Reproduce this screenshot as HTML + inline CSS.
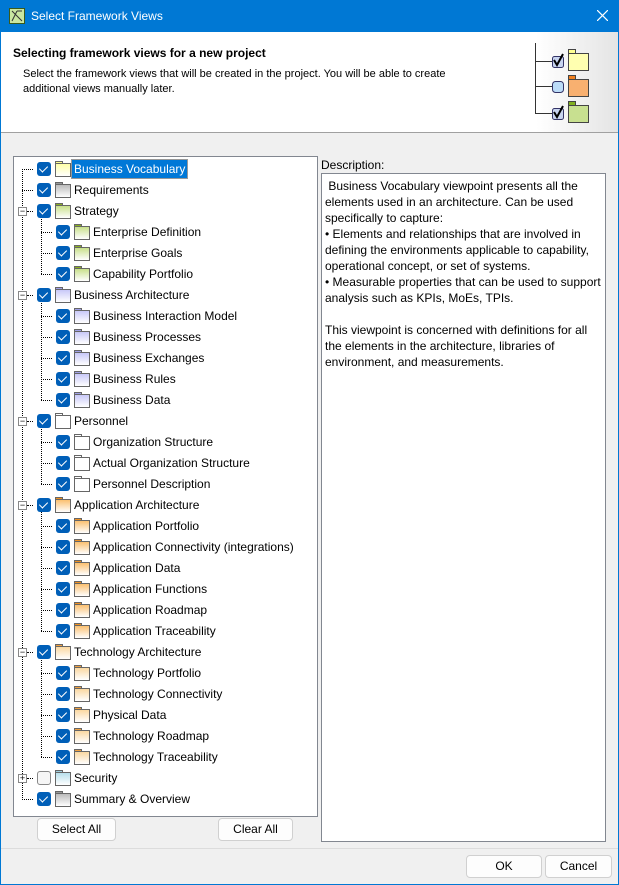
<!DOCTYPE html>
<html><head><meta charset="utf-8"><style>
*{box-sizing:border-box;margin:0;padding:0}
body{width:619px;height:885px;background:#f0f0f0;font-family:"Liberation Sans",Tahoma,sans-serif;font-size:12px;color:#000;position:relative;overflow:hidden}
.win{position:absolute;left:0;top:0;width:619px;height:885px;border:1px solid #0078d4}
.title{position:absolute;left:0;top:0;width:619px;height:32px;background:#0078d4;color:#fff;font-size:12px}
.title span{position:absolute;left:31px;top:9px}
.hdr{position:absolute;left:1px;top:32px;width:617px;height:101px;background:#fff;border-bottom:1px solid #a0a0a0;overflow:hidden}
.tree{position:absolute;left:13px;top:156px;width:305px;height:661px;background:#fff;border:1px solid #828790}
.row{position:absolute;height:16px;line-height:16px;white-space:nowrap}
.cb{position:absolute;top:1px;width:14px;height:14px;border-radius:3px;background:#005fb8}
.cb::after{content:"";position:absolute;left:4px;top:2px;width:4px;height:7px;border:solid #fff;border-width:0 1px 1px 0;transform:rotate(45deg)}
.cb.off{background:#f6f6f6;border:1px solid #888}
.cb.off::after{display:none}
.fd{position:absolute;top:2px;width:14px;height:12px}
.fd::before{content:"";position:absolute;left:0;top:-2px;width:6px;height:3px;border:1px solid #666;border-bottom:none;background:var(--t)}
.fd::after{content:"";position:absolute;left:0;top:0;width:14px;height:12px;border:1px solid #666;background:linear-gradient(var(--c),#fff)}
.tx{position:absolute;top:0}
.dv{position:absolute;border-left:1px dotted #000;width:0}
.dh{position:absolute;border-top:1px dotted #000;height:0}
.ex{position:absolute;width:9px;height:9px;border:1px solid #888;background:#fff;font-size:9px;line-height:7px;text-align:center;color:#000}
.desc{position:absolute;left:321px;top:173px;width:285px;height:669px;background:#fff;border:1px solid #828790;padding:4px 3px;line-height:16px}
.btn{position:absolute;height:23px;border:1px solid #d0d0d0;border-radius:4px;background:#fdfdfd;text-align:center;line-height:21px}
</style></head><body>
<div class="win"></div>
<div class="title">
<svg style="position:absolute;left:9px;top:8px" width="16" height="16"><rect x="0.5" y="0.5" width="15" height="15" fill="#c9e7a1" stroke="#3a5a1a"/><path d="M3 3 L13 13 M3 13 L8 3 M8 3 L13 3" stroke="#333" fill="none"/></svg>
<span>Select Framework Views</span>
<svg style="position:absolute;left:597px;top:10px" width="11" height="11"><path d="M0 0L11 11M11 0L0 11" stroke="#fff" stroke-width="1.2"/></svg>
</div>
<div class="hdr">
<div style="position:absolute;left:515px;top:0;width:102px;height:100px;background:linear-gradient(90deg,#fff 20%,#e4e4e4)"></div>
<div style="position:absolute;left:12px;top:14px;font-weight:bold;font-size:12px">Selecting framework views for a new project</div>
<div style="position:absolute;left:22px;top:35px;line-height:15px;font-size:11px">Select the framework views that will be created in the project. You will be able to create<br>additional views manually later.</div>
<svg style="position:absolute;left:529px;top:0" width="80" height="100">
<path d="M5.5 11 V81 M5 29.5 H22 M5 54.5 H22 M5 81.5 H22" stroke="#333" fill="none"/>
<rect x="22.5" y="24.5" width="11" height="11" rx="2" fill="#c8d4f0" stroke="#336"/><path d="M24 28 L27 33 L33 22" stroke="#000" stroke-width="2" fill="none"/>
<rect x="22.5" y="49.5" width="11" height="11" rx="3" fill="#bcdcf8" stroke="#336"/>
<rect x="22.5" y="76.5" width="11" height="11" rx="2" fill="#c8d4f0" stroke="#336"/><path d="M24 80 L27 85 L33 74" stroke="#000" stroke-width="2" fill="none"/>
<rect x="38.5" y="17.5" width="7" height="4" fill="#ffff90" stroke="#444"/><rect x="38.5" y="21.5" width="20" height="17" fill="#ffffb0" stroke="#444"/>
<rect x="38.5" y="43.5" width="7" height="4" fill="#f08020" stroke="#444"/><rect x="38.5" y="47.5" width="20" height="17" fill="#f8b070" stroke="#444"/>
<rect x="38.5" y="69.5" width="7" height="4" fill="#80b020" stroke="#444"/><rect x="38.5" y="73.5" width="20" height="17" fill="#c8e090" stroke="#444"/>
</svg>
</div>

<div class="tree">
<div class="dv" style="left:8px;top:12px;height:631px"></div>
<div class="dv" style="left:27px;top:54px;height:63px"></div>
<div class="dv" style="left:27px;top:138px;height:105px"></div>
<div class="dv" style="left:27px;top:264px;height:63px"></div>
<div class="dv" style="left:27px;top:348px;height:126px"></div>
<div class="dv" style="left:27px;top:495px;height:105px"></div>
</div>
<div id="rows" style="position:absolute;left:0;top:1px">
<div class="row" style="top:160px;left:0;width:320px"><div class="dh" style="left:22px;top:8px;width:11px"></div><div class="cb" style="left:37px"></div><div class="fd" style="left:55px;--c:#ffffa8;--t:#ffff90"></div><div class="tx" style="left:72px;top:-1px;background:#0078d7;color:#fff;padding:1px 2px;outline:1px solid #999">Business Vocabulary</div></div>
<div class="row" style="top:181px"><div class="dh" style="left:22px;top:8px;width:11px"></div><div class="cb" style="left:37px"></div><div class="fd" style="left:55px;--c:#bbb;--t:#999"></div><div class="tx" style="left:74px">Requirements</div></div>
<div class="row" style="top:202px"><div class="ex" style="left:18px;top:4px">−</div><div class="dh" style="left:27px;top:8px;width:6px"></div><div class="cb" style="left:37px"></div><div class="fd" style="left:55px;--c:#c8e08a;--t:#8ab020"></div><div class="tx" style="left:74px">Strategy</div></div>
<div class="row" style="top:223px"><div class="dh" style="left:41px;top:8px;width:11px"></div><div class="cb" style="left:56px"></div><div class="fd" style="left:74px;--c:#c8e08a;--t:#8ab020"></div><div class="tx" style="left:93px">Enterprise Definition</div></div>
<div class="row" style="top:244px"><div class="dh" style="left:41px;top:8px;width:11px"></div><div class="cb" style="left:56px"></div><div class="fd" style="left:74px;--c:#c8e08a;--t:#8ab020"></div><div class="tx" style="left:93px">Enterprise Goals</div></div>
<div class="row" style="top:265px"><div class="dh" style="left:41px;top:8px;width:11px"></div><div class="cb" style="left:56px"></div><div class="fd" style="left:74px;--c:#c8e08a;--t:#8ab020"></div><div class="tx" style="left:93px">Capability Portfolio</div></div>
<div class="row" style="top:286px"><div class="ex" style="left:18px;top:4px">−</div><div class="dh" style="left:27px;top:8px;width:6px"></div><div class="cb" style="left:37px"></div><div class="fd" style="left:55px;--c:#c8c8f8;--t:#a0a0e8"></div><div class="tx" style="left:74px">Business Architecture</div></div>
<div class="row" style="top:307px"><div class="dh" style="left:41px;top:8px;width:11px"></div><div class="cb" style="left:56px"></div><div class="fd" style="left:74px;--c:#c8c8f8;--t:#a0a0e8"></div><div class="tx" style="left:93px">Business Interaction Model</div></div>
<div class="row" style="top:328px"><div class="dh" style="left:41px;top:8px;width:11px"></div><div class="cb" style="left:56px"></div><div class="fd" style="left:74px;--c:#c8c8f8;--t:#a0a0e8"></div><div class="tx" style="left:93px">Business Processes</div></div>
<div class="row" style="top:349px"><div class="dh" style="left:41px;top:8px;width:11px"></div><div class="cb" style="left:56px"></div><div class="fd" style="left:74px;--c:#c8c8f8;--t:#a0a0e8"></div><div class="tx" style="left:93px">Business Exchanges</div></div>
<div class="row" style="top:370px"><div class="dh" style="left:41px;top:8px;width:11px"></div><div class="cb" style="left:56px"></div><div class="fd" style="left:74px;--c:#c8c8f8;--t:#a0a0e8"></div><div class="tx" style="left:93px">Business Rules</div></div>
<div class="row" style="top:391px"><div class="dh" style="left:41px;top:8px;width:11px"></div><div class="cb" style="left:56px"></div><div class="fd" style="left:74px;--c:#c8c8f8;--t:#a0a0e8"></div><div class="tx" style="left:93px">Business Data</div></div>
<div class="row" style="top:412px"><div class="ex" style="left:18px;top:4px">−</div><div class="dh" style="left:27px;top:8px;width:6px"></div><div class="cb" style="left:37px"></div><div class="fd" style="left:55px;--c:#fff;--t:#fff"></div><div class="tx" style="left:74px">Personnel</div></div>
<div class="row" style="top:433px"><div class="dh" style="left:41px;top:8px;width:11px"></div><div class="cb" style="left:56px"></div><div class="fd" style="left:74px;--c:#fff;--t:#fff"></div><div class="tx" style="left:93px">Organization Structure</div></div>
<div class="row" style="top:454px"><div class="dh" style="left:41px;top:8px;width:11px"></div><div class="cb" style="left:56px"></div><div class="fd" style="left:74px;--c:#fff;--t:#fff"></div><div class="tx" style="left:93px">Actual Organization Structure</div></div>
<div class="row" style="top:475px"><div class="dh" style="left:41px;top:8px;width:11px"></div><div class="cb" style="left:56px"></div><div class="fd" style="left:74px;--c:#fff;--t:#fff"></div><div class="tx" style="left:93px">Personnel Description</div></div>
<div class="row" style="top:496px"><div class="ex" style="left:18px;top:4px">−</div><div class="dh" style="left:27px;top:8px;width:6px"></div><div class="cb" style="left:37px"></div><div class="fd" style="left:55px;--c:#fbc070;--t:#f09020"></div><div class="tx" style="left:74px">Application Architecture</div></div>
<div class="row" style="top:517px"><div class="dh" style="left:41px;top:8px;width:11px"></div><div class="cb" style="left:56px"></div><div class="fd" style="left:74px;--c:#fbc070;--t:#f09020"></div><div class="tx" style="left:93px">Application Portfolio</div></div>
<div class="row" style="top:538px"><div class="dh" style="left:41px;top:8px;width:11px"></div><div class="cb" style="left:56px"></div><div class="fd" style="left:74px;--c:#fbc070;--t:#f09020"></div><div class="tx" style="left:93px">Application Connectivity (integrations)</div></div>
<div class="row" style="top:559px"><div class="dh" style="left:41px;top:8px;width:11px"></div><div class="cb" style="left:56px"></div><div class="fd" style="left:74px;--c:#fbc070;--t:#f09020"></div><div class="tx" style="left:93px">Application Data</div></div>
<div class="row" style="top:580px"><div class="dh" style="left:41px;top:8px;width:11px"></div><div class="cb" style="left:56px"></div><div class="fd" style="left:74px;--c:#fbc070;--t:#f09020"></div><div class="tx" style="left:93px">Application Functions</div></div>
<div class="row" style="top:601px"><div class="dh" style="left:41px;top:8px;width:11px"></div><div class="cb" style="left:56px"></div><div class="fd" style="left:74px;--c:#fbc070;--t:#f09020"></div><div class="tx" style="left:93px">Application Roadmap</div></div>
<div class="row" style="top:622px"><div class="dh" style="left:41px;top:8px;width:11px"></div><div class="cb" style="left:56px"></div><div class="fd" style="left:74px;--c:#fbc070;--t:#f09020"></div><div class="tx" style="left:93px">Application Traceability</div></div>
<div class="row" style="top:643px"><div class="ex" style="left:18px;top:4px">−</div><div class="dh" style="left:27px;top:8px;width:6px"></div><div class="cb" style="left:37px"></div><div class="fd" style="left:55px;--c:#fbd8a0;--t:#f0a040"></div><div class="tx" style="left:74px">Technology Architecture</div></div>
<div class="row" style="top:664px"><div class="dh" style="left:41px;top:8px;width:11px"></div><div class="cb" style="left:56px"></div><div class="fd" style="left:74px;--c:#fbd8a0;--t:#f0a040"></div><div class="tx" style="left:93px">Technology Portfolio</div></div>
<div class="row" style="top:685px"><div class="dh" style="left:41px;top:8px;width:11px"></div><div class="cb" style="left:56px"></div><div class="fd" style="left:74px;--c:#fbd8a0;--t:#f0a040"></div><div class="tx" style="left:93px">Technology Connectivity</div></div>
<div class="row" style="top:706px"><div class="dh" style="left:41px;top:8px;width:11px"></div><div class="cb" style="left:56px"></div><div class="fd" style="left:74px;--c:#fbd8a0;--t:#f0a040"></div><div class="tx" style="left:93px">Physical Data</div></div>
<div class="row" style="top:727px"><div class="dh" style="left:41px;top:8px;width:11px"></div><div class="cb" style="left:56px"></div><div class="fd" style="left:74px;--c:#fbd8a0;--t:#f0a040"></div><div class="tx" style="left:93px">Technology Roadmap</div></div>
<div class="row" style="top:748px"><div class="dh" style="left:41px;top:8px;width:11px"></div><div class="cb" style="left:56px"></div><div class="fd" style="left:74px;--c:#fbd8a0;--t:#f0a040"></div><div class="tx" style="left:93px">Technology Traceability</div></div>
<div class="row" style="top:769px"><div class="ex" style="left:18px;top:4px">+</div><div class="dh" style="left:27px;top:8px;width:6px"></div><div class="cb off" style="left:37px"></div><div class="fd" style="left:55px;--c:#b8e0ec;--t:#a0d0e0"></div><div class="tx" style="left:74px">Security</div></div>
<div class="row" style="top:790px"><div class="dh" style="left:22px;top:8px;width:11px"></div><div class="cb" style="left:37px"></div><div class="fd" style="left:55px;--c:#bbb;--t:#999"></div><div class="tx" style="left:74px">Summary &amp; Overview</div></div>
</div>

<div style="position:absolute;left:321px;top:158px">Description:</div>
<div class="desc">&nbsp;Business Vocabulary viewpoint presents all the elements used in an architecture. Can be used specifically to capture:<br>• Elements and relationships that are involved in defining the environments applicable to capability, operational concept, or set of systems.<br>• Measurable properties that can be used to support analysis such as KPIs, MoEs, TPIs.<br><br>This viewpoint is concerned with definitions for all the elements in the architecture, libraries of environment, and measurements.</div>

<div class="btn" style="left:37px;top:818px;width:79px">Select All</div>
<div class="btn" style="left:218px;top:818px;width:75px">Clear All</div>
<div style="position:absolute;left:1px;top:848px;width:617px;border-top:1px solid #dcdcdc"></div>
<div class="btn" style="left:466px;top:855px;width:76px">OK</div>
<div class="btn" style="left:545px;top:855px;width:67px">Cancel</div>
</body></html>
